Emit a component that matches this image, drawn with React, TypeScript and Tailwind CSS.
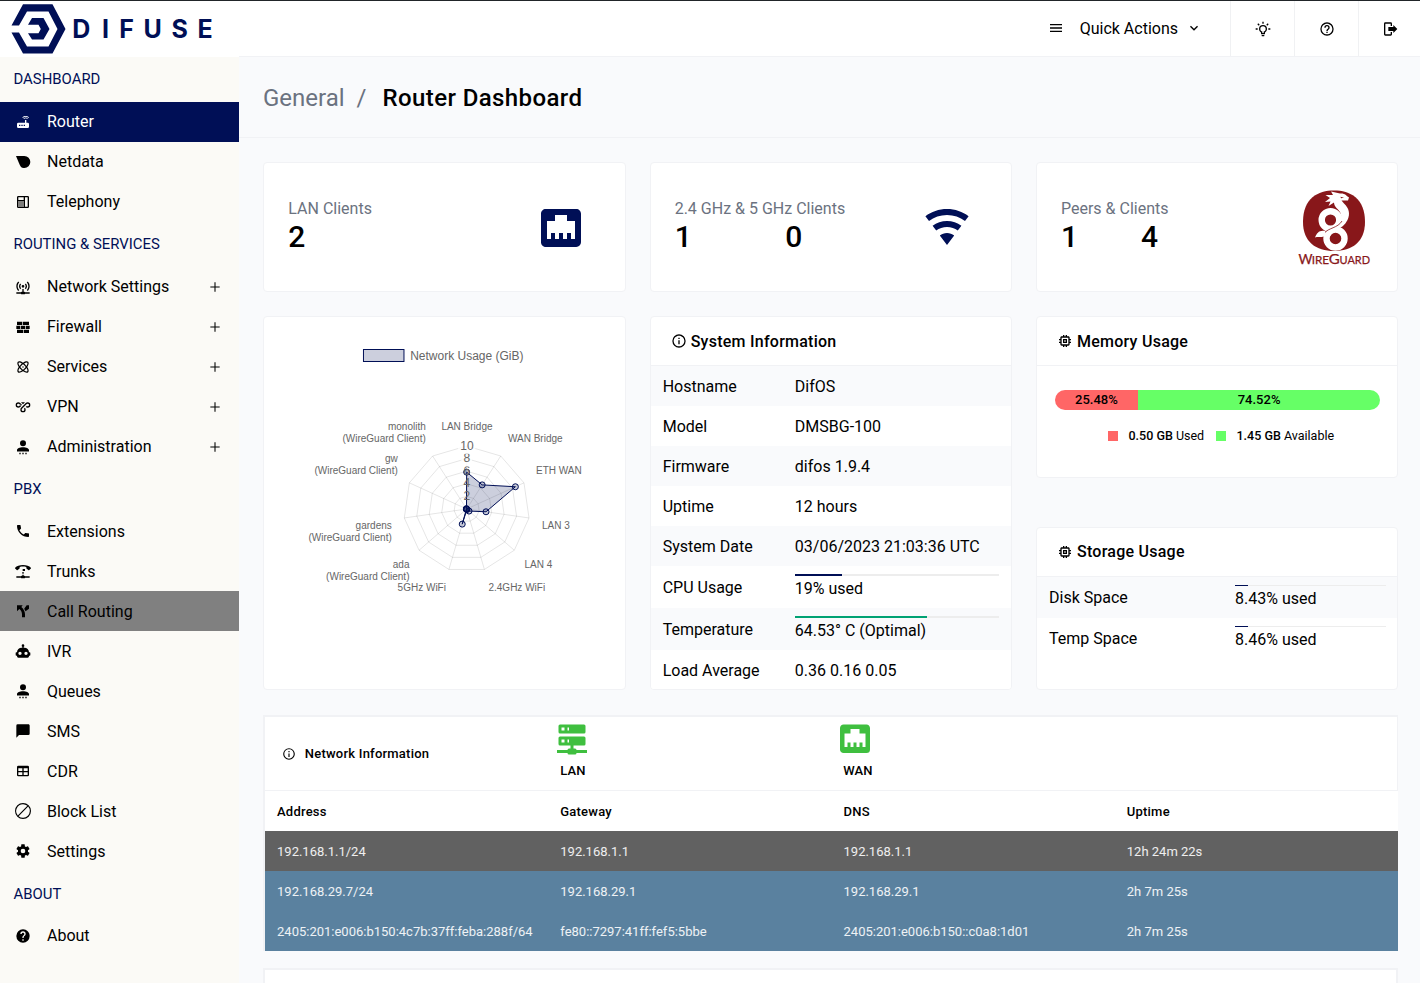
import React from "react";

const ICONS = {
  router:
    "M20.2,5.9L21,5.1C19.6,3.7 17.8,3 16,3C14.2,3 12.4,3.7 11,5.1L11.8,5.9C13,4.8 14.5,4.2 16,4.2C17.5,4.2 19,4.8 20.2,5.9M19.3,6.7C18.4,5.8 17.2,5.3 16,5.3C14.8,5.3 13.6,5.8 12.7,6.7L13.5,7.5C14.2,6.8 15.1,6.5 16,6.5C16.9,6.5 17.8,6.8 18.5,7.5L19.3,6.7M19,13H17V9H15V13H5A2,2 0 0,0 3,15V19A2,2 0 0,0 5,21H19A2,2 0 0,0 21,19V15A2,2 0 0,0 19,13M8,18H6V16H8V18M11.5,18H9.5V16H11.5V18M15,18H13V16H15V18Z",
  netdata: "M1.5,3H14A9,9 0 0,1 14,21H13C10,21 8.5,19.5 7.2,16.5Z",
  deskphone:
    "M5,3H19A2,2 0 0,1 21,5V19A2,2 0 0,1 19,21H5A2,2 0 0,1 3,19V5A2,2 0 0,1 5,3M15,5V19H19V5H15M5,5V9H13V5H5M5,11V13H7V11H5M8,11V13H10V11H8M11,11V13H13V11H11M5,14V16H7V14H5M8,14V16H10V14H8M11,14V16H13V14H11M5,17V19H7V17H5M8,17V19H10V17H8M11,17V19H13V17H11Z",
  accessPoint:
    "M4.93,3.93C3.12,5.74 2,8.24 2,11C2,13.76 3.12,16.26 4.93,18.07L6.34,16.66C4.89,15.22 4,13.22 4,11C4,8.79 4.89,6.78 6.34,5.34L4.93,3.93M19.07,3.93L17.66,5.34C19.11,6.78 20,8.79 20,11C20,13.22 19.11,15.22 17.66,16.66L19.07,18.07C20.88,16.26 22,13.76 22,11C22,8.24 20.88,5.74 19.07,3.93M7.76,6.76C6.67,7.85 6,9.35 6,11C6,12.65 6.67,14.15 7.76,15.24L9.17,13.83C8.45,13.11 8,12.11 8,11C8,9.89 8.45,8.89 9.17,8.17L7.76,6.76M16.24,6.76L14.83,8.17C15.55,8.89 16,9.89 16,11C16,12.11 15.55,13.11 14.83,13.83L16.24,15.24C17.33,14.15 18,12.65 18,11C18,9.35 17.33,7.85 16.24,6.76M12,9A2,2 0 0,0 10,11A2,2 0 0,0 12,13A2,2 0 0,0 14,11A2,2 0 0,0 12,9M11,15V19H10A1,1 0 0,0 9,20H2V22H9A1,1 0 0,0 10,23H14A1,1 0 0,0 15,22H22V20H15A1,1 0 0,0 14,19H13V15H11Z",
  wall: "M3,16H12V21H3V16M2,10H8V15H2V10M9,10H15V15H9V10M16,10H22V15H16V10M13,16H21V21H13V16M3,4H11V9H3V4M12,4H21V9H12V4Z",
  atom: "M12,11A1,1 0 0,1 13,12A1,1 0 0,1 12,13A1,1 0 0,1 11,12A1,1 0 0,1 12,11M4.22,4.22C5.65,2.79 8.75,3.43 12,5.56C15.25,3.43 18.35,2.79 19.78,4.22C21.21,5.65 20.57,8.75 18.44,12C20.57,15.25 21.21,18.35 19.78,19.78C18.35,21.21 15.25,20.57 12,18.44C8.75,20.57 5.65,21.21 4.22,19.78C2.79,18.35 3.43,15.25 5.56,12C3.43,8.75 2.79,5.65 4.22,4.22M15.54,8.46C16.15,9.08 16.71,9.71 17.23,10.34C18.61,8.21 19.11,6.38 18.36,5.64C17.62,4.89 15.79,5.39 13.66,6.77C14.29,7.29 14.92,7.85 15.54,8.46M8.46,15.54C7.85,14.92 7.29,14.29 6.77,13.66C5.39,15.79 4.89,17.62 5.64,18.36C6.38,19.11 8.21,18.61 10.34,17.23C9.71,16.71 9.08,16.15 8.46,15.54M5.64,5.64C4.89,6.38 5.39,8.21 6.77,10.34C7.29,9.71 7.85,9.08 8.46,8.46C9.08,7.85 9.71,7.29 10.34,6.77C8.21,5.39 6.38,4.89 5.64,5.64M9.88,14.12C10.58,14.82 11.3,15.46 12,16.03C12.7,15.46 13.42,14.82 14.12,14.12C14.82,13.42 15.46,12.7 16.03,12C15.46,11.3 14.82,10.58 14.12,9.88C13.42,9.18 12.7,8.54 12,7.97C11.3,8.54 10.58,9.18 9.88,9.88C9.18,10.58 8.54,11.3 7.97,12C8.54,12.7 9.18,13.42 9.88,14.12M18.36,18.36C19.11,17.62 18.61,15.79 17.23,13.66C16.71,14.29 16.15,14.92 15.54,15.54C14.92,16.15 14.29,16.71 13.66,17.23C15.79,18.61 17.62,19.11 18.36,18.36Z",
  vpn: "M9,5H15L12,8L9,5M10.5,14.66C10.2,15 10,15.5 10,16A2,2 0 0,0 12,18A2,2 0 0,0 14,16C14,15.45 13.78,14.95 13.41,14.59L14.83,13.17C15.55,13.9 16,14.9 16,16A4,4 0 0,1 12,20A4,4 0 0,1 8,16C8,14.93 8.42,13.96 9.1,13.25L9.09,13.24L16.17,6.17C16.89,5.45 17.89,5 19,5A4,4 0 0,1 23,9A4,4 0 0,1 19,13C17.9,13 16.9,12.55 16.17,11.83L17.59,10.41C17.95,10.78 18.45,11 19,11A2,2 0 0,0 21,9A2,2 0 0,0 19,7C18.45,7 17.95,7.22 17.59,7.59L10.5,14.66M6.41,7.59C6.05,7.22 5.55,7 5,7A2,2 0 0,0 3,9A2,2 0 0,0 5,11C5.55,11 6.05,10.78 6.41,10.41L8.5,8.35L9.9,9.75L7.83,11.83C7.1,12.55 6.1,13 5,13A4,4 0 0,1 1,9A4,4 0 0,1 5,5C6.11,5 7.11,5.45 7.83,6.17L10.59,8.93L9.17,10.35L6.41,7.59Z",
  person:
    "M12,2A4.5,4.5 0 0,1 16.5,6.5A4.5,4.5 0 0,1 12,11A4.5,4.5 0 0,1 7.5,6.5A4.5,4.5 0 0,1 12,2M12,12.2C17,12.2 21,14 21,16.5V18.8H3V16.5C3,14 7,12.2 12,12.2M6.5,20.8H8.5V23H6.5M11,20.8H13V23H11M15.5,20.8H17.5V23H15.5Z",
  phone:
    "M6.62,10.79C8.06,13.62 10.38,15.94 13.21,17.38L15.41,15.18C15.69,14.9 16.08,14.82 16.43,14.93C17.55,15.3 18.75,15.5 20,15.5A1,1 0 0,1 21,16.5V20A1,1 0 0,1 20,21A17,17 0 0,1 3,4A1,1 0 0,1 4,3H7.5A1,1 0 0,1 8.5,4C8.5,5.25 8.7,6.45 9.07,7.57C9.18,7.92 9.1,8.31 8.82,8.59L6.62,10.79Z",
  trunk:
    "M12,3C7,3 2.5,4.6 .2,7C-.1,7.4 -.1,7.8 .2,8.2L2.6,10.6C3,11 3.6,10.9 3.9,10.6L6.5,8.6C6.9,8.3 7,8 7,7.6V6.1C10.2,5.1 13.8,5.1 17,6.1V7.6C17,8 17.1,8.3 17.5,8.6L20.1,10.6C20.4,10.9 21,11 21.4,10.6L23.8,8.2C24.1,7.8 24.1,7.4 23.8,7C21.5,4.6 17,3 12,3M11.5,9H15V12H11.5M11,13.5H13V16H11M11,17.5H13V19H14A1,1 0 0,1 15,20H22V22H15A1,1 0 0,1 14,23H10A1,1 0 0,1 9,22H2V20H9A1,1 0 0,1 10,19H11Z",
  fork: "M3,3.500H11.500L9.500,6C13,9 15,13 15,17V21.500H10.500V17C10.500,13.500 9,10.500 6.500,9L3,12.500V3.500M21,3.500V8.500L15.800,12.500L13.800,8.500L17.500,3.500H21Z",
  robot:
    "M12,2A2,2 0 0,1 14,4C14,4.74 13.6,5.39 13,5.73V7H14A7,7 0 0,1 21,14H22A1,1 0 0,1 23,15V18A1,1 0 0,1 22,19H21V20A2,2 0 0,1 19,22H5A2,2 0 0,1 3,20V19H2A1,1 0 0,1 1,18V15A1,1 0 0,1 2,14H3A7,7 0 0,1 10,7H11V5.73C10.4,5.39 10,4.74 10,4A2,2 0 0,1 12,2M7.5,13A2.5,2.5 0 0,0 5,15.5A2.5,2.5 0 0,0 7.5,18A2.5,2.5 0 0,0 10,15.5A2.5,2.5 0 0,0 7.5,13M16.5,13A2.5,2.5 0 0,0 14,15.5A2.5,2.5 0 0,0 16.5,18A2.5,2.5 0 0,0 19,15.5A2.5,2.5 0 0,0 16.5,13Z",
  message: "M20,2H4A2,2 0 0,0 2,4V22L6,18H20A2,2 0 0,0 22,16V4C22,2.89 21.1,2 20,2Z",
  table:
    "M5,4H19A2,2 0 0,1 21,6V18A2,2 0 0,1 19,20H5A2,2 0 0,1 3,18V6A2,2 0 0,1 5,4M5,8V12H11V8H5M13,8V12H19V8H13M5,14V18H11V14H5M13,14V18H19V14H13Z",
  block:
    "M12,0A12,12 0 1,1 12,24A12,12 0 1,1 12,0M12,1.8A10.2,10.2 0 0,0 4.200,18.570L18.570,4.200A10.2,10.2 0 0,0 12,1.8M19.800,5.430L5.430,19.800A10.2,10.2 0 0,0 19.800,5.430Z",
  cog: "M12,15.5A3.5,3.5 0 0,1 8.5,12A3.5,3.5 0 0,1 12,8.5A3.5,3.5 0 0,1 15.5,12A3.5,3.5 0 0,1 12,15.5M19.43,12.97C19.47,12.65 19.5,12.33 19.5,12C19.5,11.67 19.47,11.34 19.43,11L21.54,9.37C21.73,9.22 21.78,8.95 21.66,8.73L19.66,5.27C19.54,5.05 19.27,4.96 19.05,5.05L16.56,6.05C16.04,5.66 15.5,5.32 14.87,5.07L14.5,2.42C14.46,2.18 14.25,2 14,2H10C9.75,2 9.54,2.18 9.5,2.42L9.13,5.07C8.5,5.32 7.96,5.66 7.44,6.05L4.95,5.05C4.73,4.96 4.46,5.05 4.34,5.27L2.34,8.73C2.21,8.95 2.27,9.22 2.46,9.37L4.57,11C4.53,11.34 4.5,11.67 4.5,12C4.5,12.33 4.53,12.65 4.57,12.97L2.46,14.63C2.27,14.78 2.21,15.05 2.34,15.27L4.34,18.73C4.46,18.95 4.73,19.03 4.95,18.95L7.44,17.94C7.96,18.34 8.5,18.68 9.13,18.93L9.5,21.58C9.54,21.82 9.75,22 10,22H14C14.25,22 14.46,21.82 14.5,21.58L14.87,18.93C15.5,18.67 16.04,18.34 16.56,17.94L19.05,18.95C19.27,19.03 19.54,18.95 19.66,18.73L21.66,15.27C21.78,15.05 21.73,14.78 21.54,14.63L19.43,12.97Z",
  help: "M15.07,11.25L14.17,12.17C13.45,12.89 13,13.5 13,15H11V14.5C11,13.39 11.45,12.39 12.17,11.67L13.41,10.41C13.78,10.05 14,9.55 14,9C14,7.89 13.1,7 12,7A2,2 0 0,0 10,9H8A4,4 0 0,1 12,5A4,4 0 0,1 16,9C16,9.88 15.64,10.67 15.07,11.25M13,19H11V17H13M12,2A10,10 0 0,0 2,12A10,10 0 0,0 12,22A10,10 0 0,0 22,12C22,6.47 17.5,2 12,2Z",
  helpOutline:
    "M11,18H13V16H11V18M12,2A10,10 0 0,0 2,12A10,10 0 0,0 12,22A10,10 0 0,0 22,12A10,10 0 0,0 12,2M12,20C7.59,20 4,16.41 4,12C4,7.59 7.59,4 12,4C16.41,4 20,7.59 20,12C20,16.41 16.41,20 12,20M12,6A4,4 0 0,0 8,10H10A2,2 0 0,1 12,8A2,2 0 0,1 14,10C14,12 11,11.75 11,15H13C13,12.75 16,12.5 16,10A4,4 0 0,0 12,6Z",
  info: "M11,9H13V7H11M12,20C7.59,20 4,16.41 4,12C4,7.59 7.59,4 12,4C16.41,4 20,7.59 20,12C20,16.41 16.41,20 12,20M12,2A10,10 0 0,0 2,12A10,10 0 0,0 12,22A10,10 0 0,0 22,12A10,10 0 0,0 12,2M11,17H13V11H11V17Z",
  menu: "M3,6H21V8H3V6M3,11H21V13H3V11M3,16H21V18H3V16Z",
  chevron: "M7.41,8.58L12,13.17L16.59,8.58L18,10L12,16L6,10L7.41,8.58Z",
  bulb: "M20,11H23V13H20V11M1,11H4V13H1V11M13,1V4H11V1H13M4.92,3.5L7.05,5.64L5.63,7.05L3.5,4.93L4.92,3.5M16.95,5.63L19.07,3.5L20.5,4.93L18.37,7.05L16.95,5.63M12,6A6,6 0 0,1 18,12C18,14.22 16.79,16.16 15,17.2V19A1,1 0 0,1 14,20H10A1,1 0 0,1 9,19V17.2C7.21,16.16 6,14.22 6,12A6,6 0 0,1 12,6M14,21V22A1,1 0 0,1 13,23H11A1,1 0 0,1 10,22V21H14M11,18H13V15.87C14.73,15.43 16,13.86 16,12A4,4 0 0,0 12,8A4,4 0 0,0 8,12C8,13.86 9.27,15.43 11,15.87V18Z",
  logout:
    "M17,18V15H9.500V9H17V6L23,12L17,18M13,2A2,2 0 0,1 15,4V7.500H13V4H5V20H13V16.500H15V20A2,2 0 0,1 13,22H5A2,2 0 0,1 3,20V4A2,2 0 0,1 5,2H13Z",
  cpu: "M17,17H7V7H17M21,11V9H19V7C19,5.89 18.1,5 17,5H15V3H13V5H11V3H9V5H7C5.89,5 5,5.89 5,7V9H3V11H5V13H3V15H5V17A2,2 0 0,0 7,19H9V21H11V19H13V21H15V19H17A2,2 0 0,0 19,17V15H21V13H19V11M13,13H11V11H13M15,9H9V15H15V9Z",
  ethernet:
    "M7,15H9V18H11V15H13V18H15V15H17V18H19V9H15V6H9V9H5V18H7V15M4.38,3H19.63C20.94,3 22,4.06 22,5.38V19.63A2.37,2.37 0 0,1 19.63,22H4.38C3.06,22 2,20.94 2,19.63V5.38C2,4.06 3.06,3 4.38,3Z",
  wifi: "M12,21L15.6,16.2C14.6,15.45 13.35,15 12,15C10.65,15 9.4,15.45 8.4,16.2L12,21M12,3C7.95,3 4.21,4.34 1.2,6.6L3,9C5.5,7.12 8.62,6 12,6C15.38,6 18.5,7.12 21,9L22.8,6.6C19.79,4.34 16.05,3 12,3M12,9C9.3,9 6.81,9.89 4.8,11.4L6.6,13.8C8.1,12.67 9.97,12 12,12C14.03,12 15.9,12.67 17.4,13.8L19.2,11.4C17.19,9.89 14.7,9 12,9Z",
  server:
    "M13,19H14A1,1 0 0,1 15,20H22V22H15A1,1 0 0,1 14,23H10A1,1 0 0,1 9,22H2V20H9A1,1 0 0,1 10,19H11V17H4A1,1 0 0,1 3,16V12A1,1 0 0,1 4,11H20A1,1 0 0,1 21,12V16A1,1 0 0,1 20,17H13V19M4,3H20A1,1 0 0,1 21,4V8A1,1 0 0,1 20,9H4A1,1 0 0,1 3,8V4A1,1 0 0,1 4,3M9,7H10V5H9V7M9,15H10V13H9V15M5,5V7H7V5H5M5,13V15H7V13H5Z",
  plus: "M19,12.800H12.800V19H11.200V12.800H5V11.200H11.200V5H12.800V11.200H19V12.800Z",
};
type IconName = keyof typeof ICONS;

function Icon({ name, className = "size-4" }: { name: IconName; className?: string }) {
  return (
    <svg viewBox="0 0 24 24" className={`block shrink-0 ${className}`} fill="currentColor" fillRule="evenodd" aria-hidden="true">
      <path d={ICONS[name]} />
    </svg>
  );
}

interface NavItem {
  label: string;
  icon: IconName;
  state?: "active" | "hover";
  expandable?: boolean;
}

const NAV: { title: string; items: NavItem[] }[] = [
  {
    title: "DASHBOARD",
    items: [
      { label: "Router", icon: "router", state: "active" },
      { label: "Netdata", icon: "netdata" },
      { label: "Telephony", icon: "deskphone" },
    ],
  },
  {
    title: "ROUTING & SERVICES",
    items: [
      { label: "Network Settings", icon: "accessPoint", expandable: true },
      { label: "Firewall", icon: "wall", expandable: true },
      { label: "Services", icon: "atom", expandable: true },
      { label: "VPN", icon: "vpn", expandable: true },
      { label: "Administration", icon: "person", expandable: true },
    ],
  },
  {
    title: "PBX",
    items: [
      { label: "Extensions", icon: "phone" },
      { label: "Trunks", icon: "trunk" },
      { label: "Call Routing", icon: "fork", state: "hover" },
      { label: "IVR", icon: "robot" },
      { label: "Queues", icon: "person" },
      { label: "SMS", icon: "message" },
      { label: "CDR", icon: "table" },
      { label: "Block List", icon: "block" },
      { label: "Settings", icon: "cog" },
    ],
  },
  { title: "ABOUT", items: [{ label: "About", icon: "help" }] },
];

function Sidebar() {
  return (
    <aside className="w-[239px] shrink-0 bg-[#fbfaf6]">
      {NAV.map((section) => (
        <div key={section.title}>
          <div className="flex h-[44.800px] items-center pl-[13.5px] text-[14.900px] text-[#000f56]">{section.title}</div>
          {section.items.map((item) => (
            <div
              key={item.label}
              className={`flex h-10 items-center pr-4 pl-[15px] ${
                item.state === "active" ? "bg-[#000f56] text-white" : item.state === "hover" ? "bg-[#808080]" : ""
              }`}
            >
              <Icon name={item.icon} />
              <span className="ml-4 flex-1 pt-[0.400px]">{item.label}</span>
              {item.expandable && <Icon name="plus" />}
            </div>
          ))}
        </div>
      ))}
    </aside>
  );
}

function Logo() {
  return (
    <svg viewBox="0 0 239 56" className="h-14 w-[239px] shrink-0" fill="#000f56" aria-label="Difuse">
      <path d="M23 3.200H52.500L65.500 28L52.500 52.500H23L11.500 31.500H19L27 45.500H48.500L57.500 28L48.500 10.500H27L19 24.500H11.500Z" />
      <path d="M32 17H43.500L49.500 28L43.500 38.500H32L28 32.300H38.500L40.800 28L38.500 23.700H28Z" />
      <text x="72.200 102 119.200 143.400 171.600 197.500" y="37" fontSize="25" fontWeight="700" fontFamily="Inter, sans-serif">
        DIFUSE
      </text>
    </svg>
  );
}

function Header() {
  return (
    <header className="flex h-14 bg-white">
      <Logo />
      <div className="flex flex-1 justify-end">
        <div className="flex items-center pr-7">
          <Icon name="menu" className="mb-0.5 size-4" />
          <span className="ml-4 pb-px">Quick Actions</span>
          <Icon name="chevron" className="mb-0.5 ml-2 size-4" />
        </div>
        {(["bulb", "helpOutline", "logout"] as IconName[]).map((name) => (
          <div key={name} className="flex w-16 items-center justify-center border-l border-[#f0f1f3] last:w-[62px]">
            <Icon name={name} />
          </div>
        ))}
      </div>
    </header>
  );
}

function Card({ className = "", children }: { className?: string; children?: React.ReactNode }) {
  return <section className={`overflow-hidden rounded-[4px] border border-[#f1f2f5] bg-white ${className}`}>{children}</section>;
}

function WireGuardLogo() {
  return (
    <svg viewBox="1296 186 78 82" className="-mr-px h-[82px] w-[78px]" aria-label="WireGuard">
      <path
        fill="#88171a"
        d="M1334 190.500C1350 190.500 1365 198 1365 222C1365 242 1352 251 1334 251C1316 251 1303 242 1303 222C1303 198 1318 190.500 1334 190.500Z"
      />
      <path
        fill="#fff"
        d="M1325 202L1330 198L1325.500 195L1333 195L1331 191.500L1340 193.500C1345 193 1346 195.500 1349 197.500L1348 200.500L1341.500 200.500L1344 203.500C1349 208 1350.500 214 1347.500 220C1345 225 1341 228 1336 230L1333 227C1340 223 1342.500 218 1340.500 213C1338.500 209 1334 207 1334 202.500L1328.500 206L1330.500 201.500Z"
      />
      <circle cx="1330.500" cy="220" r="8.800" fill="none" stroke="#fff" strokeWidth="6.400" />
      <circle cx="1335.500" cy="238.500" r="9" fill="none" stroke="#fff" strokeWidth="6.400" />
      <path fill="none" stroke="#fff" strokeWidth="5" d="M1344 217C1341 226 1330 228 1327.500 236" />
      <path fill="none" stroke="#88171a" strokeWidth=".8" d="M1342 221C1338 228 1328 228 1324.500 233" />
      <path fill="#fff" d="M1325 231C1319 230 1317 233 1315 237.500C1319 236 1321 238 1325 236Z" />
      <path fill="#88171a" d="M1340.500 196.800L1344 197.800L1341 198.300Z" />
      <text fill="#88171a" stroke="#88171a" strokeWidth=".25" fontFamily="Lato, sans-serif" y="264">
        <tspan x="1298.500" fontSize="14" textLength="14" lengthAdjust="spacingAndGlyphs">W</tspan>
        <tspan x="1311.700" fontSize="11.500" textLength="17.500" lengthAdjust="spacingAndGlyphs">IRE</tspan>
        <tspan x="1328.700" fontSize="14" textLength="11" lengthAdjust="spacingAndGlyphs">G</tspan>
        <tspan x="1339.500" fontSize="11.500" textLength="30.500" lengthAdjust="spacingAndGlyphs">UARD</tspan>
      </text>
    </svg>
  );
}

function StatCard({ label, values, children }: { label: string; values: string[]; children: React.ReactNode }) {
  return (
    <Card className="flex h-[130px] items-center justify-between px-6">
      <div className="pb-1">
        <div className="leading-6 text-[#6b7280]">{label}</div>
        <div className="flex text-[30px] leading-8 font-medium">
          {values.map((v, i) => (
            <span key={i} className={i === 0 && values.length > 1 ? (label.startsWith("2.4") ? "w-[110.500px]" : "w-20") : ""}>
              {v}
            </span>
          ))}
        </div>
      </div>
      {children}
    </Card>
  );
}

const AXES: { lines: string[]; x: number; y: number; anchor: "start" | "middle" | "end"; value: number }[] = [
  { lines: ["LAN Bridge"], x: 467, y: 430, anchor: "middle", value: 5.85 },
  { lines: ["WAN Bridge"], x: 508, y: 442, anchor: "start", value: 4.55 },
  { lines: ["ETH WAN"], x: 536, y: 474, anchor: "start", value: 8.5 },
  { lines: ["LAN 3"], x: 542, y: 529, anchor: "start", value: 3.1 },
  { lines: ["LAN 4"], x: 524.5, y: 568, anchor: "start", value: 0.5 },
  { lines: ["2.4GHz WiFi"], x: 488.5, y: 591, anchor: "start", value: 0.1 },
  { lines: ["5GHz WiFi"], x: 446, y: 591, anchor: "end", value: 2.5 },
  { lines: ["ada", "(WireGuard Client)"], x: 409.5, y: 568, anchor: "end", value: 0.05 },
  { lines: ["gardens", "(WireGuard Client)"], x: 391.8, y: 529, anchor: "end", value: 0.05 },
  { lines: ["gw", "(WireGuard Client)"], x: 397.8, y: 462, anchor: "end", value: 0.05 },
  { lines: ["monolith", "(WireGuard Client)"], x: 425.8, y: 430, anchor: "end", value: 0.05 },
];

const CX = 467;
const CY = 509;
const UNIT = 6.3;

function point(i: number, value: number): [number, number] {
  const a = (i * 2 * Math.PI) / AXES.length;
  return [CX + Math.sin(a) * value * UNIT, CY - Math.cos(a) * value * UNIT];
}

function RadarChart() {
  const ring = (v: number) => AXES.map((_, i) => point(i, v).join(",")).join(" ");
  const data = AXES.map((a, i) => point(i, a.value));
  return (
    <svg viewBox="264.330 317 361 372" className="h-[372px] w-[361px]" fontFamily="'Liberation Sans', Arial, sans-serif">
      <rect x="363.800" y="349.500" width="40.500" height="12" fill="#000f56" fillOpacity=".2" stroke="#000f56" />
      <text x="410.500" y="359.600" fontSize="12" fill="#666">Network Usage (GiB)</text>
      <g fill="none" stroke="#000" strokeOpacity=".1">
        {[2, 4, 6, 8, 10].map((v) => (
          <polygon key={v} points={ring(v)} />
        ))}
        {AXES.map((_, i) => {
          const [x, y] = point(i, 10);
          return <line key={i} x1={CX} y1={CY} x2={x} y2={y} />;
        })}
      </g>
      <polygon points={data.map((p) => p.join(",")).join(" ")} fill="#000f56" fillOpacity=".2" stroke="#000f56" />
      {data.map(([x, y], i) => (
        <circle key={i} cx={x} cy={y} r="3" fill="#000f56" fillOpacity=".2" stroke="#000f56" />
      ))}
      {[2, 4, 6, 8, 10].map((v) => (
        <g key={v}>
          <rect x={CX - (v === 10 ? 8.7 : 5.3)} y={CY - v * UNIT - 8} width={v === 10 ? 17.4 : 10.6} height="16" fill="#fff" fillOpacity={v > 6 ? 0.75 : 0} />
          <text x={CX + 0.3} y={CY - v * UNIT + 3.6} fontSize="12" fill="#666" textAnchor="middle">{v}</text>
        </g>
      ))}
      {AXES.map((a) => (
        <text key={a.lines.join()} fontSize="10" fill="#666" textAnchor={a.anchor}>
          {a.lines.map((line, n) => (
            <tspan key={n} x={a.x + 0.3} y={a.y - 0.5 + n * 12}>{line}</tspan>
          ))}
        </text>
      ))}
    </svg>
  );
}

function CardTitle({ icon, children, className = "pt-px" }: { icon: IconName; children: React.ReactNode; className?: string }) {
  return (
    <h2 className="flex h-[49px] items-center border-b border-[#f1f2f5] pl-5 font-medium">
      <Icon name={icon} />
      <span className={`ml-1 tracking-[0.250px] ${className}`}>{children}</span>
    </h2>
  );
}

function Meter({ percent, green = false, thin = false }: { percent: number; green?: boolean; thin?: boolean }) {
  return (
    <div className={`bg-[#ededed] ${thin ? "h-[1.500px]" : "h-0.5"}`}>
      <div className={`h-full ${green ? "bg-[#00a273]" : "bg-[#000f56]"}`} style={{ width: `${percent}%` }} />
    </div>
  );
}

const SYSTEM: { label: string; value: string; percent?: number }[] = [
  { label: "Hostname", value: "DifOS" },
  { label: "Model", value: "DMSBG-100" },
  { label: "Firmware", value: "difos 1.9.4" },
  { label: "Uptime", value: "12 hours" },
  { label: "System Date", value: "03/06/2023 21:03:36 UTC" },
  { label: "CPU Usage", value: "19% used", percent: 23 },
  { label: "Temperature", value: "64.53° C (Optimal)", percent: 64.53 },
  { label: "Load Average", value: "0.36 0.16 0.05" },
];

function SystemCard() {
  return (
    <Card className="h-[374px]">
      <CardTitle icon="info">System Information</CardTitle>
      {SYSTEM.map((row) => (
        <div
          key={row.label}
          className={`flex items-center px-3 odd:bg-white even:bg-[#f9fafc] ${row.percent ? "h-[42px]" : "h-10"}`}
        >
          <div className="w-[132.200px] pt-0.5">{row.label}</div>
          {row.percent ? (
            <div className="flex-1">
              <Meter percent={row.percent} green={row.label === "Temperature"} />
              <div className="h-6 pt-px leading-6">{row.value}</div>
            </div>
          ) : (
            <div className="pt-0.5">{row.value}</div>
          )}
        </div>
      ))}
    </Card>
  );
}

function MemoryCard() {
  return (
    <Card className="h-[162px]">
      <CardTitle icon="cpu">Memory Usage</CardTitle>
      <div className="mt-6 mr-[17px] ml-[18px] flex h-5 overflow-hidden rounded-full text-center text-[13px] leading-5 font-medium">
        <div className="w-[25.480%] bg-[#ff6666]">25.48%</div>
        <div className="flex-1 bg-[#66ff66]">74.52%</div>
      </div>
      <div className="mt-4 flex items-center pl-[71.500px] text-[12.500px] leading-5">
        <span className="size-[10px] bg-[#ff6666]" />
        <span className="ml-[10px] w-[88px]"><b className="font-medium">0.50 GB</b> Used</span>
        <span className="size-[10px] bg-[#66ff66]" />
        <span className="ml-[10px]"><b className="font-medium">1.45 GB</b> Available</span>
      </div>
    </Card>
  );
}

function StorageCard() {
  return (
    <Card className="h-[163px]">
      <CardTitle icon="cpu" className="pb-px">Storage Usage</CardTitle>
      {[
        { label: "Disk Space", percent: 8.43 },
        { label: "Temp Space", percent: 8.46 },
      ].map((row) => (
        <div key={row.label} className="flex h-[41px] items-center pr-[11px] pl-3 odd:bg-white even:bg-[#f9fafc]">
          <div className="w-[186px] pt-px">{row.label}</div>
          <div className="flex-1">
            <Meter percent={row.percent} thin />
            <div className="h-6 pt-px leading-6">{row.percent}% used</div>
          </div>
        </div>
      ))}
    </Card>
  );
}

const NETWORK = [
  ["192.168.1.1/24", "192.168.1.1", "192.168.1.1", "12h 24m 22s"],
  ["192.168.29.7/24", "192.168.29.1", "192.168.29.1", "2h 7m 25s"],
  ["2405:201:e006:b150:4c7b:37ff:feba:288f/64", "fe80::7297:41ff:fef5:5bbe", "2405:201:e006:b150::c0a8:1d01", "2h 7m 25s"],
];

function NetworkCard() {
  return (
    <section className="mt-[25px] h-[236px] border-t border-l-2 border-[#f1f2f5] bg-white text-[13px]">
      <div className="grid h-[75px] grid-cols-4 border-t border-r border-b border-[#f1f2f5] font-medium tracking-[0.22px]">
        <div className="flex items-center pl-[17px]">
          <Icon name="info" className="size-3.5" />
          <span className="ml-[8.500px]">Network Information</span>
        </div>
        {(["server", "ethernet"] as IconName[]).map((name) => (
          <div key={name} className="pl-[5.800px]">
            <Icon name={name} className="mt-[2.500px] size-9 text-[#3fbf3f]" />
            <div className="mt-[5px] pl-[6px] leading-5">{name === "server" ? "LAN" : "WAN"}</div>
          </div>
        ))}
      </div>
      <div className="grid h-10 grid-cols-4 items-center pt-0.5 font-medium tracking-[0.22px]">
        {["Address", "Gateway", "DNS", "Uptime"].map((h) => (
          <div key={h} className="pl-[11.700px]">{h}</div>
        ))}
      </div>
      {NETWORK.map((row, r) => (
        <div key={r} className={`grid h-10 grid-cols-4 items-center pt-0.5 text-white/90 ${r === 0 ? "bg-[#616161]" : "bg-[#5a819f]"}`}>
          {row.map((cell, c) => (
            <div key={c} className="pl-[11.700px] whitespace-nowrap">{cell}</div>
          ))}
        </div>
      ))}
    </section>
  );
}

export default function App() {
  return (
    <div className="flex h-[983px] w-[1420px] flex-col overflow-hidden border-t border-[#212529] bg-[#f9fafc] font-[Roboto,sans-serif] text-base text-black">
      <Header />
      <div className="flex min-h-0 flex-1">
        <Sidebar />
        <main className="min-w-0 flex-1">
          <div className="-mt-px flex h-[82px] items-center border-y border-[#f1f2f5] pt-0.5 pl-6 text-2xl">
            <span className="text-[#6b7280]">General</span>
            <span className="ml-3 text-[#6b7280]">/</span>
            <h1 className="ml-4 font-medium tracking-[0.400px]">Router Dashboard</h1>
          </div>
          <div className="w-[1159.330px] pt-6 pl-[24.330px]">
            <div className="grid grid-cols-3 gap-6">
              <StatCard label="LAN Clients" values={["2"]}>
                <Icon name="ethernet" className="mr-[15.600px] size-12 text-[#000f56]" />
              </StatCard>
              <StatCard label="2.4 GHz & 5 GHz Clients" values={["1", "0"]}>
                <Icon name="wifi" className="mr-[15.600px] size-12 text-[#000f56]" />
              </StatCard>
              <StatCard label="Peers & Clients" values={["1", "4"]}>
                <WireGuardLogo />
              </StatCard>
            </div>
            <div className="mt-6 grid grid-cols-3 gap-6">
              <Card className="h-[374px]">
                <RadarChart />
              </Card>
              <SystemCard />
              <div className="flex flex-col justify-between">
                <MemoryCard />
                <StorageCard />
              </div>
            </div>
            <NetworkCard />
            <section className="mt-[17px] h-24 border-2 border-[#f1f2f5] bg-white" />
          </div>
        </main>
      </div>
    </div>
  );
}
